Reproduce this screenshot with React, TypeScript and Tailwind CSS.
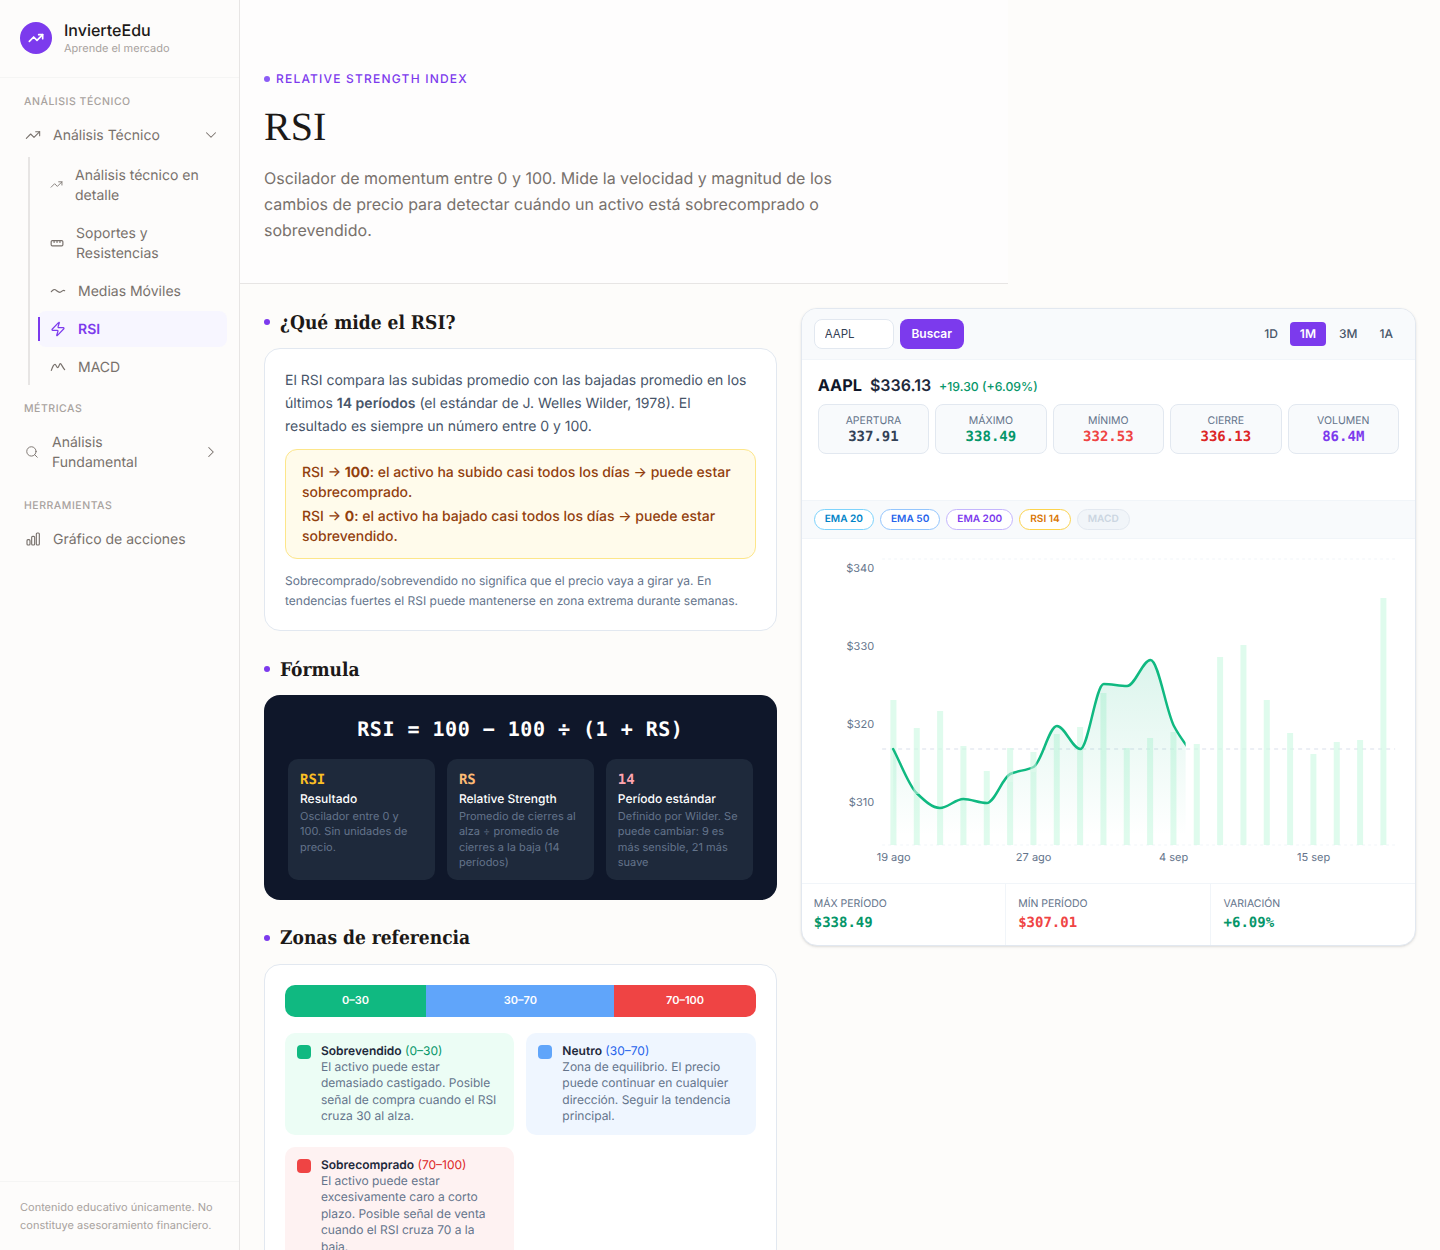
import { ChevronDown, ChevronRight, Search, TrendingUp, Zap } from "lucide-react";
import type { ReactNode } from "react";

const bars = [700, 728, 711, 746, 771, 748, 752, 734, 727, 693, 748, 738, 732, 744, 657, 645, 700, 733, 754, 742, 740, 598];
const linePoints: [number, number][] = [
  [893, 749], [916.4, 793], [939.8, 808], [963.2, 799], [986.6, 803], [1010, 774], [1033.4, 767],
  [1056.8, 726], [1080.2, 749], [1103.6, 684], [1127, 686], [1150.4, 660], [1173.8, 726], [1197.2, 760],
];
// tramos donde la barra tapa la linea
const lineFades = [
  [913.3, 782, 12],
  [1007, 768, 14],
  [1030.3, 760, 12],
];

// curva monotona igual a la del grafico
const monotonePath = (pts: [number, number][]) => {
  const n = pts.length;
  const slope: number[] = [];
  for (let i = 0; i < n - 1; i++) slope.push((pts[i + 1][1] - pts[i][1]) / (pts[i + 1][0] - pts[i][0]));
  const tan = pts.map((_, i) => {
    if (i === 0) return slope[0];
    if (i === n - 1) return slope[n - 2];
    if (slope[i - 1] * slope[i] <= 0) return 0;
    return (2 * slope[i - 1] * slope[i]) / (slope[i - 1] + slope[i]);
  });
  let d = `M${pts[0][0]} ${pts[0][1]}`;
  for (let i = 0; i < n - 1; i++) {
    const h = (pts[i + 1][0] - pts[i][0]) / 3;
    d += `C${pts[i][0] + h} ${pts[i][1] + tan[i] * h} ${pts[i + 1][0] - h} ${pts[i + 1][1] - tan[i + 1] * h} ${pts[i + 1][0]} ${pts[i + 1][1]}`;
  }
  return d;
};

const WaveIcon = () => (
  <svg viewBox="0 0 24 24" fill="none" stroke="currentColor" strokeWidth="1.8" strokeLinecap="round" className="w-full">
    <path d="M2 13c3-4 5-4 8-1.500s5 3.500 7 1.500 3-3 5-1.500" />
  </svg>
);

const MacdIcon = () => (
  <svg viewBox="0 0 24 24" fill="none" stroke="currentColor" strokeWidth="1.8" strokeLinecap="round" strokeLinejoin="round" className="w-full">
    <path d="M2 17c2-6 4-9 5.500-9s2.500 5 4 5 2.500-6 4-6 3 5 6.500 9" />
  </svg>
);

const RulerIcon = () => (
  <svg viewBox="0 0 24 24" fill="none" stroke="currentColor" strokeWidth="2" strokeLinecap="round" strokeLinejoin="round" className="w-full">
    <rect x="2" y="8" width="20" height="9" rx="2" />
    <path d="M7 8v3M12 8v3M17 8v3" />
  </svg>
);

const BarsIcon = () => (
  <svg viewBox="0 0 24 24" fill="none" stroke="currentColor" strokeWidth="1.7" className="w-4 h-4 shrink-0">
    <rect x="3" y="13" width="4.500" height="8" rx="1.500" />
    <rect x="10" y="8" width="4.500" height="13" rx="1.500" />
    <rect x="17" y="3" width="4.500" height="18" rx="1.500" />
  </svg>
);

const SideLabel = ({ children, className }: { children: ReactNode; className: string }) => (
  <div className={`px-6 h-4 mb-[7px] text-[10.5px] leading-4 font-medium tracking-[0.05em] uppercase text-[#a8a29e] ${className}`}>
    {children}
  </div>
);

const SubItem = ({ icon, label, active }: { icon: ReactNode; label: string; active?: boolean }) => (
  <div className={`relative flex items-center gap-3 px-3 py-2 rounded-lg text-sm leading-5 ${active ? "bg-[#f7f6ff] text-[#7c3aed] font-semibold" : "text-[#78716c]"}`}>
    {active && <span className="absolute left-0 top-1.5 w-0.5 h-6 bg-[#7c3aed]" />}
    <span className="block w-4 min-w-0">{icon}</span>
    <span className="translate-y-px">{label}</span>
  </div>
);

const Sidebar = () => (
  <aside className="w-[240px] h-[1250px] shrink-0 flex flex-col border-r border-[#e7e5e4] bg-[#fdfcfb]">
    <div className="h-[78px] shrink-0 flex items-center gap-3 px-5 pb-0.5 border-b border-[#f5f5f4]">
      <div className="w-8 h-8 rounded-full bg-[#7c3aed] flex items-center justify-center text-white">
        <TrendingUp size={16} strokeWidth={2.5} />
      </div>
      <div>
        <div className="text-base leading-5 font-medium text-[#1c1917]">InvierteEdu</div>
        <div className="text-[11px] leading-4 text-[#a8a29e]">Aprende el mercado</div>
      </div>
    </div>
    <nav className="flex-1 text-[#78716c]">
      <SideLabel className="mt-4">Análisis Técnico</SideLabel>
      <div className="flex items-center gap-3 pl-[25px] pr-[19px] py-2 text-sm leading-5">
        <TrendingUp size={16} strokeWidth={1.6} className="shrink-0" />
        <span className="flex-1 translate-y-px">Análisis Técnico</span>
        <ChevronDown size={18} strokeWidth={1.4} className="shrink-0" />
      </div>
      <div className="mt-1 ml-7 mr-3 pl-2 border-l-2 border-[#e7e5e4] flex flex-col gap-0.5">
        <SubItem icon={<TrendingUp strokeWidth={1.6} className="w-full h-auto" />} label="Análisis técnico en detalle" />
        <SubItem icon={<RulerIcon />} label="Soportes y Resistencias" />
        <SubItem icon={<WaveIcon />} label="Medias Móviles" />
        <SubItem icon={<Zap strokeWidth={1.8} className="w-full h-auto" />} label="RSI" active />
        <SubItem icon={<MacdIcon />} label="MACD" />
      </div>
      <SideLabel className="mt-4">Métricas</SideLabel>
      <div className="flex items-center gap-[13px] pl-[25px] pr-[19px] py-2 text-sm leading-5">
        <Search size={14} strokeWidth={1.6} className="shrink-0" />
        <span className="flex-1 translate-y-px">Análisis<br />Fundamental</span>
        <ChevronRight size={18} strokeWidth={1.4} className="shrink-0" />
      </div>
      <SideLabel className="mt-[18px]">Herramientas</SideLabel>
      <div className="flex items-center gap-3 pl-[25px] pr-[19px] py-2 text-sm leading-5">
        <BarsIcon />
        <span className="translate-y-px">Gráfico de acciones</span>
      </div>
    </nav>
    <div className="px-5 py-4 border-t border-[#f5f5f4] text-[11px] leading-[18px] text-[#a8a29e]">
      Contenido educativo únicamente. No constituye asesoramiento financiero.
    </div>
  </aside>
);

const SectionTitle = ({ children, className = "" }: { children: ReactNode; className?: string }) => (
  <h2 className={`flex items-center gap-2.5 h-7 mb-3 font-['DejaVu_Serif_Condensed',serif] text-[19px] font-bold text-[#1c1917] ${className}`}>
    <span className="w-1.5 h-1.5 rounded-full bg-[#7c3aed]" />
    <span className="translate-y-px">{children}</span>
  </h2>
);

const formulaParts = [
  { code: "RSI", color: "text-[#fbbf24]", title: "Resultado", text: "Oscilador entre 0 y 100. Sin unidades de precio." },
  { code: "RS", color: "text-[#fdba74]", title: "Relative Strength", text: "Promedio de cierres al alza ÷ promedio de cierres a la baja (14 períodos)" },
  { code: "14", color: "text-[#fda4af]", title: "Período estándar", text: "Definido por Wilder. Se puede cambiar: 9 es más sensible, 21 más suave" },
];

const zones = [
  {
    name: "Sobrevendido", range: "(0–30)", bg: "bg-[#ecfdf5]", dot: "bg-[#10b981]", tone: "text-[#059669]",
    text: "El activo puede estar demasiado castigado. Posible señal de compra cuando el RSI cruza 30 al alza.",
  },
  {
    name: "Neutro", range: "(30–70)", bg: "bg-[#eff6ff]", dot: "bg-[#60a5fa]", tone: "text-[#2563eb]",
    text: "Zona de equilibrio. El precio puede continuar en cualquier dirección. Seguir la tendencia principal.",
  },
  {
    name: "Sobrecomprado", range: "(70–100)", bg: "bg-[#fef2f2]", dot: "bg-[#ef4444]", tone: "text-[#dc2626]",
    text: "El activo puede estar excesivamente caro a corto plazo. Posible señal de venta cuando el RSI cruza 70 a la baja.",
  },
];

const LeftColumn = () => (
  <div className="min-w-0">
    <SectionTitle>¿Qué mide el RSI?</SectionTitle>
    <div className="bg-white border border-[#e2e8f0] rounded-2xl px-5 pt-5 pb-[19px]">
      <p className="text-sm leading-[23px] text-[#475569]">
        El RSI compara las subidas promedio con las bajadas promedio en los últimos <strong className="font-semibold">14 períodos</strong> (el estándar de J. Welles Wilder, 1978). El resultado es siempre un número entre 0 y 100.
      </p>
      <div className="mt-[11px] px-4 pt-[13px] pb-[11px] bg-[#fffbeb] border border-[#fde68a] rounded-xl text-sm leading-5 font-medium text-[#92400e] flex flex-col gap-1">
        <p>RSI → <strong className="font-bold">100</strong>: el activo ha subido casi todos los días → puede estar sobrecomprado.</p>
        <p>RSI → <strong className="font-bold">0</strong>: el activo ha bajado casi todos los días → puede estar sobrevendido.</p>
      </div>
      <p className="mt-3 text-xs leading-5 text-[#64748b]">
        Sobrecomprado/sobrevendido no significa que el precio vaya a girar ya. En tendencias fuertes el RSI puede mantenerse en zona extrema durante semanas.
      </p>
    </div>

    <SectionTitle className="mt-6">Fórmula</SectionTitle>
    <div className="bg-[#0f172a] rounded-2xl px-6 pt-6 pb-5">
      <div className="mb-5 text-center font-['DejaVu_Sans_Mono',monospace] text-xl leading-5 font-semibold tracking-[0.025em] text-white">
        RSI = 100 − 100 ÷ (1 + RS)
      </div>
      <div className="grid grid-cols-3 gap-3">
        {formulaParts.map((p) => (
          <div key={p.code} className="bg-[#1e293b] rounded-[10px] px-3 pt-[13px] pb-[9px]">
            <div className={`font-['DejaVu_Sans_Mono',monospace] text-sm leading-4 font-semibold mb-[3px] ${p.color}`}>{p.code}</div>
            <div className="text-xs leading-4 font-medium text-white">{p.title}</div>
            <div className="mt-0.5 text-[11px] leading-[15.400px] text-[#64748b]">{p.text}</div>
          </div>
        ))}
      </div>
    </div>

    <SectionTitle className="mt-6">Zonas de referencia</SectionTitle>
    <div className="bg-white border border-[#e2e8f0] rounded-2xl p-5">
      <div className="flex h-8 mb-4 rounded-[10px] overflow-hidden text-[11px] font-semibold text-white">
        <div className="w-[30%] bg-[#10b981] flex items-center justify-center">0–30</div>
        <div className="w-[40%] bg-[#60a5fa] flex items-center justify-center">30–70</div>
        <div className="w-[30%] bg-[#ef4444] flex items-center justify-center">70–100</div>
      </div>
      <div className="grid grid-cols-2 gap-3">
        {zones.map((z) => (
          <div key={z.name} className={`flex gap-2.5 px-3 py-2.5 rounded-[10px] ${z.bg}`}>
            <span className={`w-3.5 h-3.5 mt-0.5 shrink-0 rounded ${z.dot}`} />
            <div className="text-xs leading-[16.400px] text-[#64748b]">
              <div>
                <span className="font-semibold text-[#1e293b]">{z.name}</span> <span className={z.tone}>{z.range}</span>
              </div>
              {z.text}
            </div>
          </div>
        ))}
      </div>
    </div>
  </div>
);

const Chart = () => {
  const line = monotonePath(linePoints);
  const area = `${line}L1197.2 845L893 845Z`;
  return (
    <svg viewBox="802 539 613 344" className="block w-full h-[344px]">
      <defs>
        <linearGradient id="areaFill" x1="0" y1="0" x2="0" y2="1">
          <stop offset="5%" stopColor="#10b981" stopOpacity="0.14" />
          <stop offset="95%" stopColor="#10b981" stopOpacity="0" />
        </linearGradient>
        <clipPath id="reveal">
          <rect x="880" y="540" width="305.500" height="320" />
        </clipPath>
      </defs>
      <path d="M882 559H1395M882 845H1395" stroke="#f1f5f9" strokeWidth="1" strokeDasharray="3 3" />
      <path d="M882 749H1395" stroke="#d9dfea" strokeWidth="1" strokeDasharray="4 4" />
      {bars.map((top, i) => (
        <rect key={i} x={890.300 + i * 23.333} y={top} width="6" height={845 - top} fill="#d1fae5" opacity="0.7" />
      ))}
      <g clipPath="url(#reveal)">
        <path d={area} fill="url(#areaFill)" />
        <path d={line} fill="none" stroke="#10b981" strokeWidth="2.500" strokeLinecap="round" />
      </g>
      {lineFades.map(([x, y, h]) => (
        <rect key={x} x={x} y={y} width="6" height={h} fill="#e2faee" opacity="0.5" />
      ))}
      <g fontSize="11" fill="#64748b" textAnchor="end">
        <text x="874" y="572">$340</text>
        <text x="874" y="650">$330</text>
        <text x="874" y="728">$320</text>
        <text x="874" y="806">$310</text>
      </g>
      <g fontSize="11" fill="#64748b" textAnchor="middle">
        <text x="893.500" y="861">19 ago</text>
        <text x="1033.500" y="861">27 ago</text>
        <text x="1173.500" y="861">4 sep</text>
        <text x="1313.500" y="861">15 sep</text>
      </g>
    </svg>
  );
};

const stats = [
  { label: "Apertura", value: "337.91", color: "text-[#334155]" },
  { label: "Máximo", value: "338.49", color: "text-[#059669]" },
  { label: "Mínimo", value: "332.53", color: "text-[#ef4444]" },
  { label: "Cierre", value: "336.13", color: "text-[#dc2626]" },
  { label: "Volumen", value: "86.4M", color: "text-[#7c3aed]" },
];

const pills = [
  { label: "EMA 20", cls: "text-[#0284c7] border-[#7dd3fc] bg-white" },
  { label: "EMA 50", cls: "text-[#2563eb] border-[#93c5fd] bg-white" },
  { label: "EMA 200", cls: "text-[#7c3aed] border-[#c4b5fd] bg-white" },
  { label: "RSI 14", cls: "text-[#d97706] border-[#fcd34d] bg-white" },
  { label: "MACD", cls: "text-[#cbd5e1] border-[#e2e8f0] bg-[#f1f5f9]" },
];

const totals = [
  { label: "Máx período", value: "$338.49", color: "text-[#059669]" },
  { label: "Mín período", value: "$307.01", color: "text-[#ef4444]" },
  { label: "Variación", value: "+6.09%", color: "text-[#059669]" },
];

const StockPanel = () => (
  <div className="self-start bg-white border border-[#e2e8f0] rounded-2xl overflow-hidden shadow-sm">
    <div className="flex items-center justify-between pl-3 pr-[11px] py-2.5 bg-[#f8fafc] border-b border-[#f1f5f9]">
      <div className="flex gap-1.5">
        <input readOnly value="AAPL" className="w-20 h-[30px] px-2.5 bg-white border border-[#e2e8f0] rounded-lg text-[11.5px] text-[#334155] outline-none" />
        <button className="w-16 h-[30px] bg-[#7c3aed] rounded-lg text-xs font-semibold text-white">Buscar</button>
      </div>
      <div className="flex text-xs font-medium text-[#475569]">
        {["1D", "1M", "3M", "1A"].map((p) => (
          <span key={p} className={`h-6 px-2.5 flex items-center rounded ${p === "1M" ? "ml-px mr-0.5 bg-[#7c3aed] text-white font-semibold" : "mx-px"}`}>
            {p}
          </span>
        ))}
      </div>
    </div>
    <div className="h-[141px] px-4 pt-[13px] border-b border-[#f1f5f9]">
      <div className="flex items-baseline gap-2 h-[22px] mb-[9px] leading-[22px]">
        <span className="text-[16.250px] font-bold text-[#0f172a]">AAPL</span>
        <span className="text-base font-semibold text-[#1e293b]">$336.13</span>
        <span className="text-[12.250px] font-medium text-[#059669]">+19.30 (+6.09%)</span>
      </div>
      <div className="grid grid-cols-5 gap-1.5">
        {stats.map((s) => (
          <div key={s.label} className="h-[50px] pt-[9px] bg-[#f8fafc] border border-[#e2e8f0] rounded-lg text-center">
            <div className="text-[10.5px] leading-[14px] uppercase text-[#64748b]">{s.label}</div>
            <div className={`font-['DejaVu_Sans_Mono',monospace] text-sm leading-[18px] font-semibold ${s.color}`}>{s.value}</div>
          </div>
        ))}
      </div>
    </div>
    <div className="flex gap-1.5 px-3 py-2 bg-[#f8fafc] border-b border-[#f1f5f9]">
      {pills.map((p) => (
        <span key={p.label} className={`h-[21px] px-2.5 flex items-center rounded-full border text-[10.100px] font-semibold ${p.cls}`}>
          {p.label}
        </span>
      ))}
    </div>
    <Chart />
    <div className="grid grid-cols-3 border-t border-[#f1f5f9]">
      {totals.map((t, i) => (
        <div key={t.label} className={`h-[61px] pt-[13px] ${i < 2 ? "px-3 border-r border-[#f1f5f9]" : "pl-[13px] pr-3"}`}>
          <div className="text-[10.5px] leading-[14px] uppercase text-[#64748b]">{t.label}</div>
          <div className={`mt-[3px] font-['DejaVu_Sans_Mono',monospace] text-sm leading-[18px] font-semibold ${t.color}`}>{t.value}</div>
        </div>
      ))}
    </div>
  </div>
);

export default function App() {
  return (
    <div className="flex h-[1250px] overflow-hidden bg-[#fdfcfa] font-['Inter',sans-serif] antialiased [text-rendering:geometricPrecision]">
      <Sidebar />
      <main className="flex-1 min-w-0">
        <header className="w-[768px] h-[284px] px-6 pt-[71px] border-b border-[#e7e5e4] bg-[#fefdfd]">
          <div className="flex items-center gap-1.5 h-4 text-xs font-medium tracking-[0.1em] uppercase text-[#7c3aed]">
            <span className="w-1.5 h-1.5 rounded-full bg-[#8b5cf6]" />
            Relative Strength Index
          </div>
          <h1 className="mt-4 font-['Liberation_Serif',serif] text-[40px] leading-[48px] font-normal text-[#1c1917]">RSI</h1>
          <p className="mt-3.5 max-w-[580px] text-base leading-[26px] text-[#78716c]">
            Oscilador de momentum entre 0 y 100. Mide la velocidad y magnitud de los cambios de precio para detectar cuándo un activo está sobrecomprado o sobrevendido.
          </p>
        </header>
        <div className="grid grid-cols-[1fr_1.2fr] gap-6 p-6">
          <LeftColumn />
          <StockPanel />
        </div>
      </main>
    </div>
  );
}
